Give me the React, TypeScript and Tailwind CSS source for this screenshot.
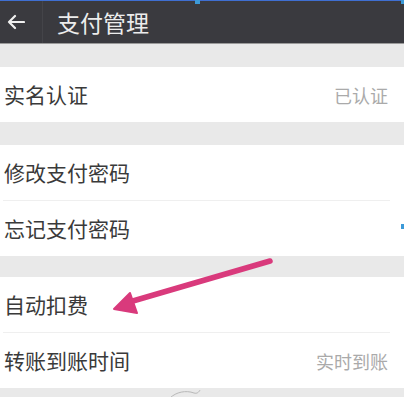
import type { ReactNode } from 'react'

const font = { fontFamily: '"Noto Sans CJK SC", "Noto Sans", sans-serif' }

function Row({ label, value, divider }: { label: string; value?: string; divider?: boolean }) {
  return (
    <div className="bg-white">
      <div className="flex h-[55px] items-center justify-between pl-[4px] pr-[16px]">
        <span className="text-[21px] leading-none text-[#3a3a3a]">{label}</span>
        {value && <span className="text-[18px] leading-none text-[#aaa]">{value}</span>}
      </div>
      {divider && <div className="ml-[3px] mr-[14px] h-px bg-[#efefef]" />}
    </div>
  )
}

function Gap({ h, children }: { h: string; children?: ReactNode }) {
  return <div className={`${h} bg-[#e9e9e9]`}>{children}</div>
}

export default function App() {
  return (
    <div className="relative h-[397px] w-[404px] overflow-hidden bg-[#e9e9e9]" style={font}>
      {/* top bar */}
      <div className="flex h-[43px] items-center border-t border-[#3f6fd2] bg-[#3a3a3f]">
        <div className="flex h-full w-[43px] items-center border-r border-[#444449] pl-[7px]">
          <svg width="18" height="16" viewBox="0 0 18 16" fill="none" stroke="#f0f0f0" strokeWidth="2.2" strokeLinecap="round" strokeLinejoin="round">
            <path d="M17 8H2M8 2L2 8l6 6" />
          </svg>
        </div>
        <span className="ml-[14px] text-[23px] leading-none text-[#ececec]">支付管理</span>
      </div>
      <div className="h-px bg-[#9a9a9a]" />

      <Gap h="h-[23px]" />
      <Row label="实名认证" value="已认证" />
      <Gap h="h-[23px]" />
      <Row label="修改支付密码" divider />
      <Row label="忘记支付密码" />
      <Gap h="h-[21px]" />
      <Row label="自动扣费" divider />
      <Row label="转账到账时间" value="实时到账" />

      {/* faint shape at bottom */}
      <svg className="absolute left-[168px] top-[389px]" width="36" height="10" viewBox="0 0 36 10" fill="none" stroke="#b8b8b8" strokeWidth="1">
        <path d="M2 9C8 3 18 1 26 4c3 1 5-1 6-3" />
      </svg>

      {/* annotation arrow */}
      <svg className="absolute left-0 top-0" width="404" height="397" viewBox="0 0 404 397">
        <line x1="270" y1="261" x2="126" y2="303" stroke="#d93a7c" strokeWidth="5.5" strokeLinecap="round" />
        <polygon points="114,309 130,293 137,313" fill="#d93a7c" stroke="#d93a7c" strokeWidth="2" strokeLinejoin="round" />
      </svg>

      {/* selection handles */}
      <div className="absolute left-[195px] top-0 h-[4px] w-[5px] bg-[#3c9ad8]" />
      <div className="absolute left-[401px] top-0 h-[4px] w-[3px] bg-[#3c9ad8]" />
      <div className="absolute left-[401px] top-[224px] h-[5px] w-[3px] bg-[#3c9ad8]" />
    </div>
  )
}
